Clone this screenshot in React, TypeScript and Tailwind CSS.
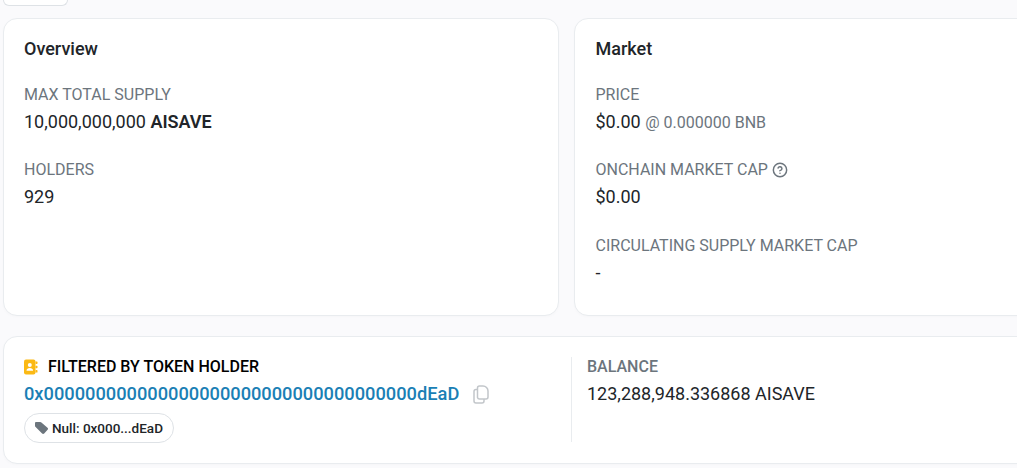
import { CircleHelp } from "lucide-react";

function Stat({ label, children, help }: { label: string; children: React.ReactNode; help?: boolean }) {
  return (
    <div className="mb-[25.4px]">
      <div className="flex items-center gap-[4px] text-[16px] leading-[22px] text-[#6c757d] uppercase">
        {label}
        {help && <CircleHelp size={16} strokeWidth={2.2} className="text-[#6c757d]" />}
      </div>
      <div className="mt-[4px] text-[18px] leading-[24px] text-[#212529]">{children}</div>
    </div>
  );
}

export default function App() {
  return (
    <div className="h-[468px] w-[1017px] overflow-hidden bg-[#fafafc] font-['Roboto',sans-serif]">
      <div className="w-[1130px] pl-[3px]">
        <div className="h-[6px] w-[65px] rounded-b-[16px] border border-t-0 border-[#dee2e6] bg-white"></div>

        <div className="mt-[12px] grid grid-cols-[556px_556px] gap-[15px]">
          <div className="h-[298px] rounded-[14px] border border-[#e9ecef] bg-white px-[20px] pt-[18px] shadow-[0_1px_3px_rgba(0,0,0,0.02)]">
            <h2 className="mb-[23px] text-[18px] leading-[24px] font-medium text-[#212529]">Overview</h2>
            <Stat label="Max Total Supply">
              10,000,000,000 <span className="font-semibold">AISAVE</span>
            </Stat>
            <Stat label="Holders">929</Stat>
          </div>

          <div className="h-[298px] rounded-[14px] border border-[#e9ecef] bg-white px-[20.5px] pt-[18px] shadow-[0_1px_3px_rgba(0,0,0,0.02)]">
            <h2 className="mb-[23px] text-[18px] leading-[24px] font-medium text-[#212529]">Market</h2>
            <Stat label="Price">
              $0.00 <span className="text-[16px] leading-[16px] text-[#6c757d]">@ 0.000000 BNB</span>
            </Stat>
            <Stat label="Onchain Market Cap" help>
              $0.00
            </Stat>
            <Stat label="Circulating Supply Market Cap">-</Stat>
          </div>
        </div>

        <div className="mt-[20px] flex h-[128px] rounded-[14px] border border-[#e9ecef] bg-white px-[20px] pt-[21px] shadow-[0_1px_3px_rgba(0,0,0,0.02)]">
          <div className="-mt-px h-[85px] w-[548px] border-r border-[#e9ecef] pt-px">
            <div className="flex items-center gap-[10px] text-[16px] leading-[18px] font-medium text-black">
              <svg width="14" height="16" viewBox="0 0 14 16" className="shrink-0">
                <rect x="0" y="0.5" width="11.5" height="15" rx="2" fill="#fbb914" />
                <rect x="11.5" y="2.5" width="2" height="2.4" rx="0.6" fill="#fbb914" />
                <rect x="11.5" y="6.8" width="2" height="2.4" rx="0.6" fill="#fbb914" />
                <rect x="11.5" y="11.1" width="2" height="2.4" rx="0.6" fill="#fbb914" />
                <circle cx="5.8" cy="6" r="2" fill="#fff" />
                <path d="M2.5 11.8c0-1.8 1.5-2.8 3.3-2.8s3.3 1 3.3 2.8z" fill="#fff" />
              </svg>
              FILTERED BY TOKEN HOLDER
            </div>
            <div className="mt-[6px] flex items-center gap-[14px]">
              <span className="text-[18.25px] leading-[24px] font-medium text-[#1a7fb5]">
                0x000000000000000000000000000000000000dEaD
              </span>
              <svg width="16" height="19" viewBox="0 0 16 19" fill="none" stroke="#c2c6ca" strokeWidth="1.5">
                <path d="M4.5 12.5V3a2 2 0 0 1 2-2h3.5a5 5 0 0 1 5 5v6a2 2 0 0 1-2 2h-6.500a2 2 0 0 1-2-1.500z" />
                <path d="M4.500 4.500H3a2 2 0 0 0-2 2V16a2 2 0 0 0 2 2h6a2 2 0 0 0 2-2v-2" />
              </svg>
            </div>
            <div className="mt-[7px] inline-flex h-[30px] items-center gap-[3px] rounded-full border border-[#dee2e6] pr-[10px] pl-[9px] text-[13.5px] font-medium text-[#212529]">
              <svg width="15" height="15" viewBox="0 0 15 15">
                <path d="M1 2.200C1 1.500 1.500 1 2.200 1h4c.5 0 .9.200 1.200.500l6.100 5.200c.7.600.7 1.500.100 2.100l-3.400 3.700c-.6.600-1.500.600-2.100 0L1.600 6.100C1.200 5.700 1 5.200 1 4.700z" fill="#6c757d" />
              </svg>
              Null: 0x000...dEaD
            </div>
          </div>
          <div className="pl-[15px]">
            <div className="text-[16px] leading-[18px] font-medium text-[#6c757d]">BALANCE</div>
            <div className="mt-[6px] text-[18px] leading-[24px] text-[#212529]">123,288,948.336868 AISAVE</div>
          </div>
        </div>
      </div>
    </div>
  );
}
